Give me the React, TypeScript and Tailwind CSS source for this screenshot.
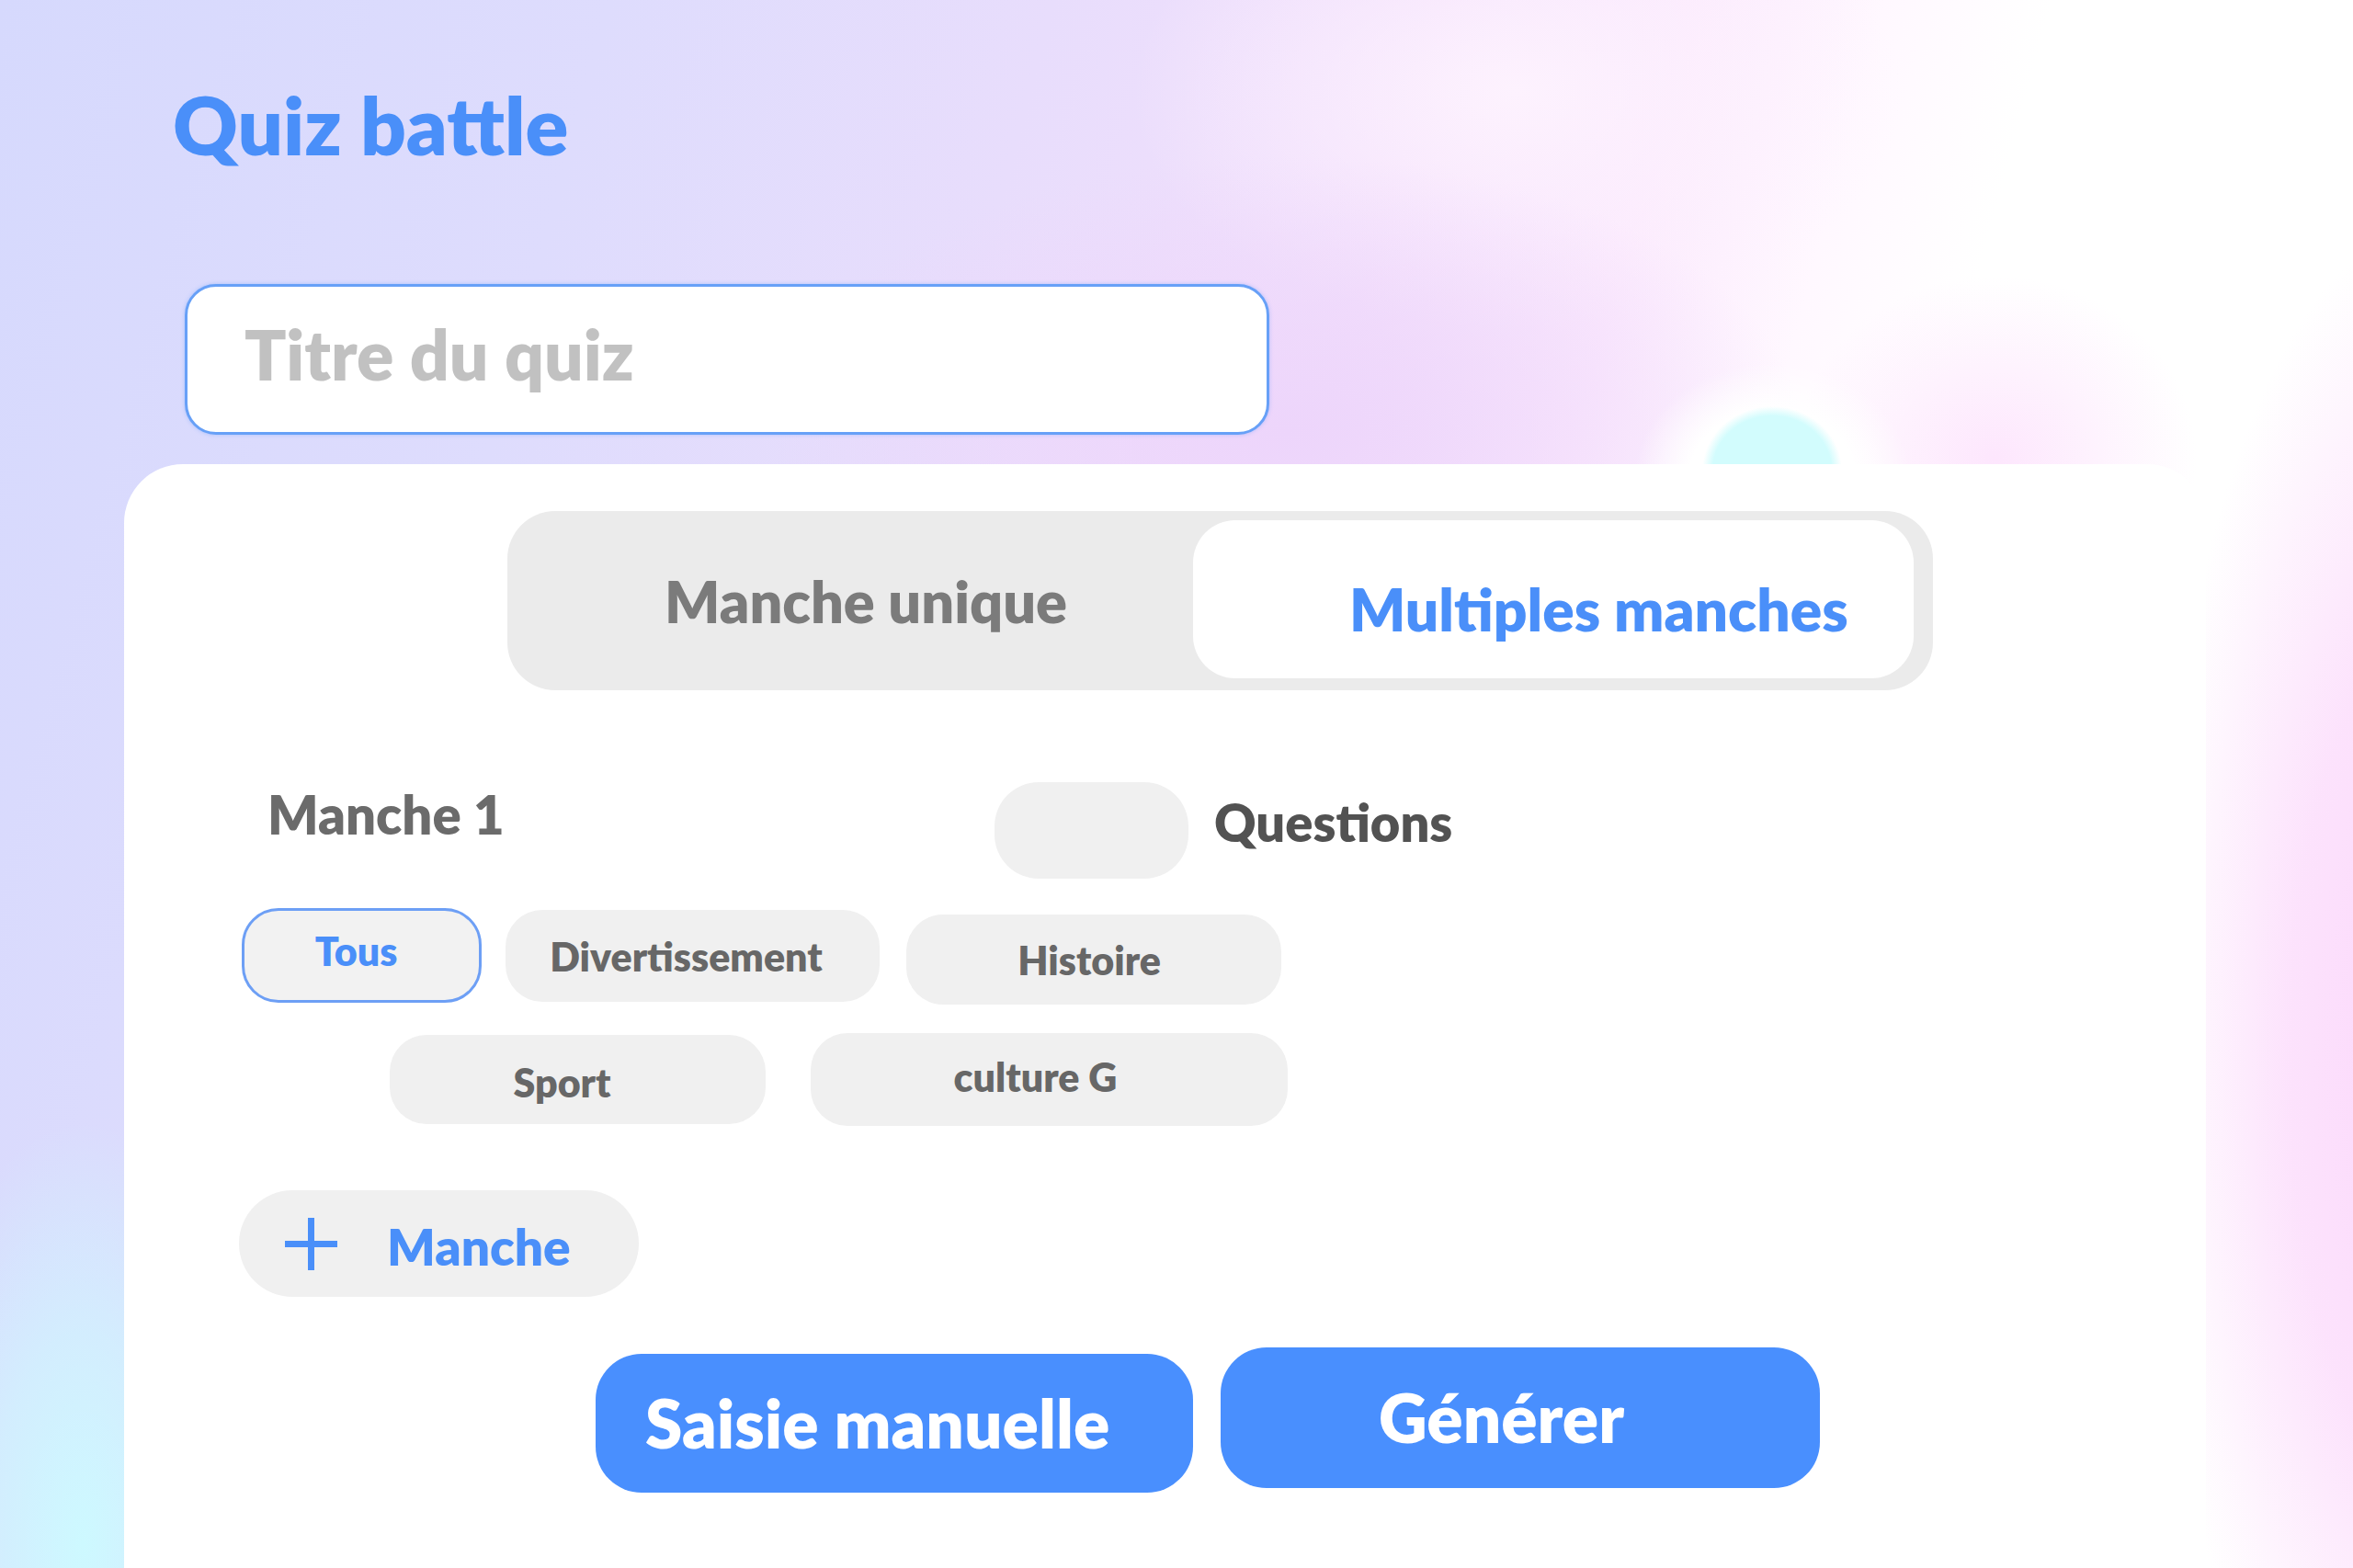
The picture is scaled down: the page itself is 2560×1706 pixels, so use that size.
import React from "react";

export default function App() {
  return (
    <div className="relative flex h-[1706px] w-full flex-col overflow-hidden bg-[radial-gradient(ellipse_76px_70px_at_1928px_512px,#d2fcfd_0%,#d2fcfd_85%,rgba(210,252,253,0)_100%),radial-gradient(ellipse_150px_125px_at_1928px_520px,#ffffff_60%,rgba(255,255,255,0)_100%),radial-gradient(ellipse_300px_900px_at_2640px_1150px,#fbd6fb_0%,rgba(251,214,251,0.7)_50%,rgba(255,255,255,0)_100%),radial-gradient(ellipse_220px_200px_at_2170px_500px,#fde6fd_0%,rgba(253,230,253,0)_100%),radial-gradient(ellipse_200px_460px_at_90px_1680px,#cdf9ff_0%,rgba(205,249,255,0.6)_50%,rgba(205,249,255,0)_100%),radial-gradient(ellipse_560px_300px_at_1400px_470px,#edd5fb_0%,rgba(237,213,251,0)_100%),radial-gradient(ellipse_420px_260px_at_1650px_100px,#fdf2fe_0%,rgba(253,242,254,0)_100%),linear-gradient(105deg,#d6d9fd_0%,#dedcfd_22%,#e8ddfc_38%,#f3e0fc_52%,#fbe9fd_61%,#fff8ff_68%,#ffffff_74%)] font-['Lato','Liberation_Sans',sans-serif]">
      <h1 className="ml-[188px] mt-[92px] text-[87px] font-extrabold leading-none text-[#4a8ff9]">Quiz battle</h1>

      <div className="ml-[201px] mt-[130px] flex h-[164px] w-[1180px] items-center rounded-[34px] border-[3px] border-[#67a0f7] bg-white pb-[12px] pl-[62px] shadow-[0_0_4px_rgba(74,143,249,0.35)]">
        <input
          className="w-full bg-transparent text-[75px] font-extrabold leading-none text-[#555] outline-none placeholder:text-[#c1c1c1]"
          placeholder="Titre du quiz"
        />
      </div>

      <div className="ml-[135px] mt-[32px] flex w-[2265px] flex-1 flex-col rounded-t-[64px] bg-white">
        {/* mode switch */}
        <div className="ml-[417px] mt-[51px] flex h-[195px] w-[1551px] rounded-[52px] bg-[#ebebeb]">
          <div className="flex w-[746px] items-center pl-[171px]">
            <span className="text-[63px] font-extrabold leading-none text-[#7b7b7b]">Manche unique</span>
          </div>
          <div className="mt-[10px] flex h-[172px] w-[784px] items-center rounded-[46px] bg-white pl-[170px] pt-[22px]">
            <span className="text-[64px] font-extrabold leading-none text-[#4a8ff9]">Multiples manches</span>
          </div>
        </div>

        {/* round header */}
        <div className="mt-[100px] flex items-start">
          <span className="ml-[156px] mt-[6px] w-[791px] text-[58px] font-extrabold leading-none text-[#6b6b6b]">Manche 1</span>
          <div className="h-[105px] w-[211px] rounded-[48px] bg-[#f0f0f0]" />
          <span className="ml-[28px] mt-[16px] text-[56px] font-extrabold leading-none text-[#525252]">Questions</span>
        </div>

        {/* categories */}
        <div className="mt-[32px] flex items-start">
          <button className="ml-[128px] flex h-[103px] w-[261px] items-center justify-center rounded-[40px] border-[3px] border-[#6d9ff5] bg-[#f2f2f2] pb-[10px] pr-[12px] text-[43px] font-extrabold leading-none text-[#4a8ff9]">
            Tous
          </button>
          <button className="ml-[26px] mt-[2px] flex h-[100px] w-[407px] items-center justify-center rounded-[40px] bg-[#f0f0f0] pr-[14px] text-[43px] font-extrabold leading-none text-[#676767]">
            Divertissement
          </button>
          <button className="ml-[29px] mt-[7px] flex h-[98px] w-[408px] items-center justify-center rounded-[40px] bg-[#f0f0f0] pr-[10px] text-[43px] font-extrabold leading-none text-[#676767]">
            Histoire
          </button>
        </div>
        <div className="mt-[31px] flex items-start">
          <button className="ml-[289px] mt-[2px] flex h-[97px] w-[409px] items-center justify-center rounded-[40px] bg-[#f0f0f0] pr-[34px] pt-[6px] text-[43px] font-extrabold leading-none text-[#676767]">
            Sport
          </button>
          <button className="ml-[49px] flex h-[101px] w-[519px] items-center justify-center rounded-[40px] bg-[#f0f0f0] pb-[6px] pr-[30px] text-[43px] font-extrabold leading-none text-[#676767]">
            culture G
          </button>
        </div>

        {/* add round */}
        <button className="ml-[125px] mt-[70px] flex h-[116px] w-[435px] items-center rounded-[58px] bg-[#f0f0f0] pl-[50px]">
          <svg width="57" height="57" viewBox="0 0 57 57" className="fill-[#4a8ff9]">
            <rect x="25" y="0" width="7" height="57" />
            <rect x="0" y="25" width="57" height="7" />
          </svg>
          <span className="ml-[54px] pt-[6px] text-[55px] font-extrabold leading-none text-[#4a8ff9]">Manche</span>
        </button>

        {/* actions */}
        <div className="mt-[55px] flex items-start">
          <button className="ml-[513px] mt-[7px] flex h-[151px] w-[650px] items-center rounded-[50px] bg-[#498ffe] pl-[54px] text-[73px] font-extrabold leading-none text-white">
            Saisie manuelle
          </button>
          <button className="ml-[30px] flex h-[153px] w-[652px] items-center rounded-[50px] bg-[#498ffe] pl-[172px] text-[73px] font-extrabold leading-none text-white">
            Générer
          </button>
        </div>
      </div>
    </div>
  );
}
